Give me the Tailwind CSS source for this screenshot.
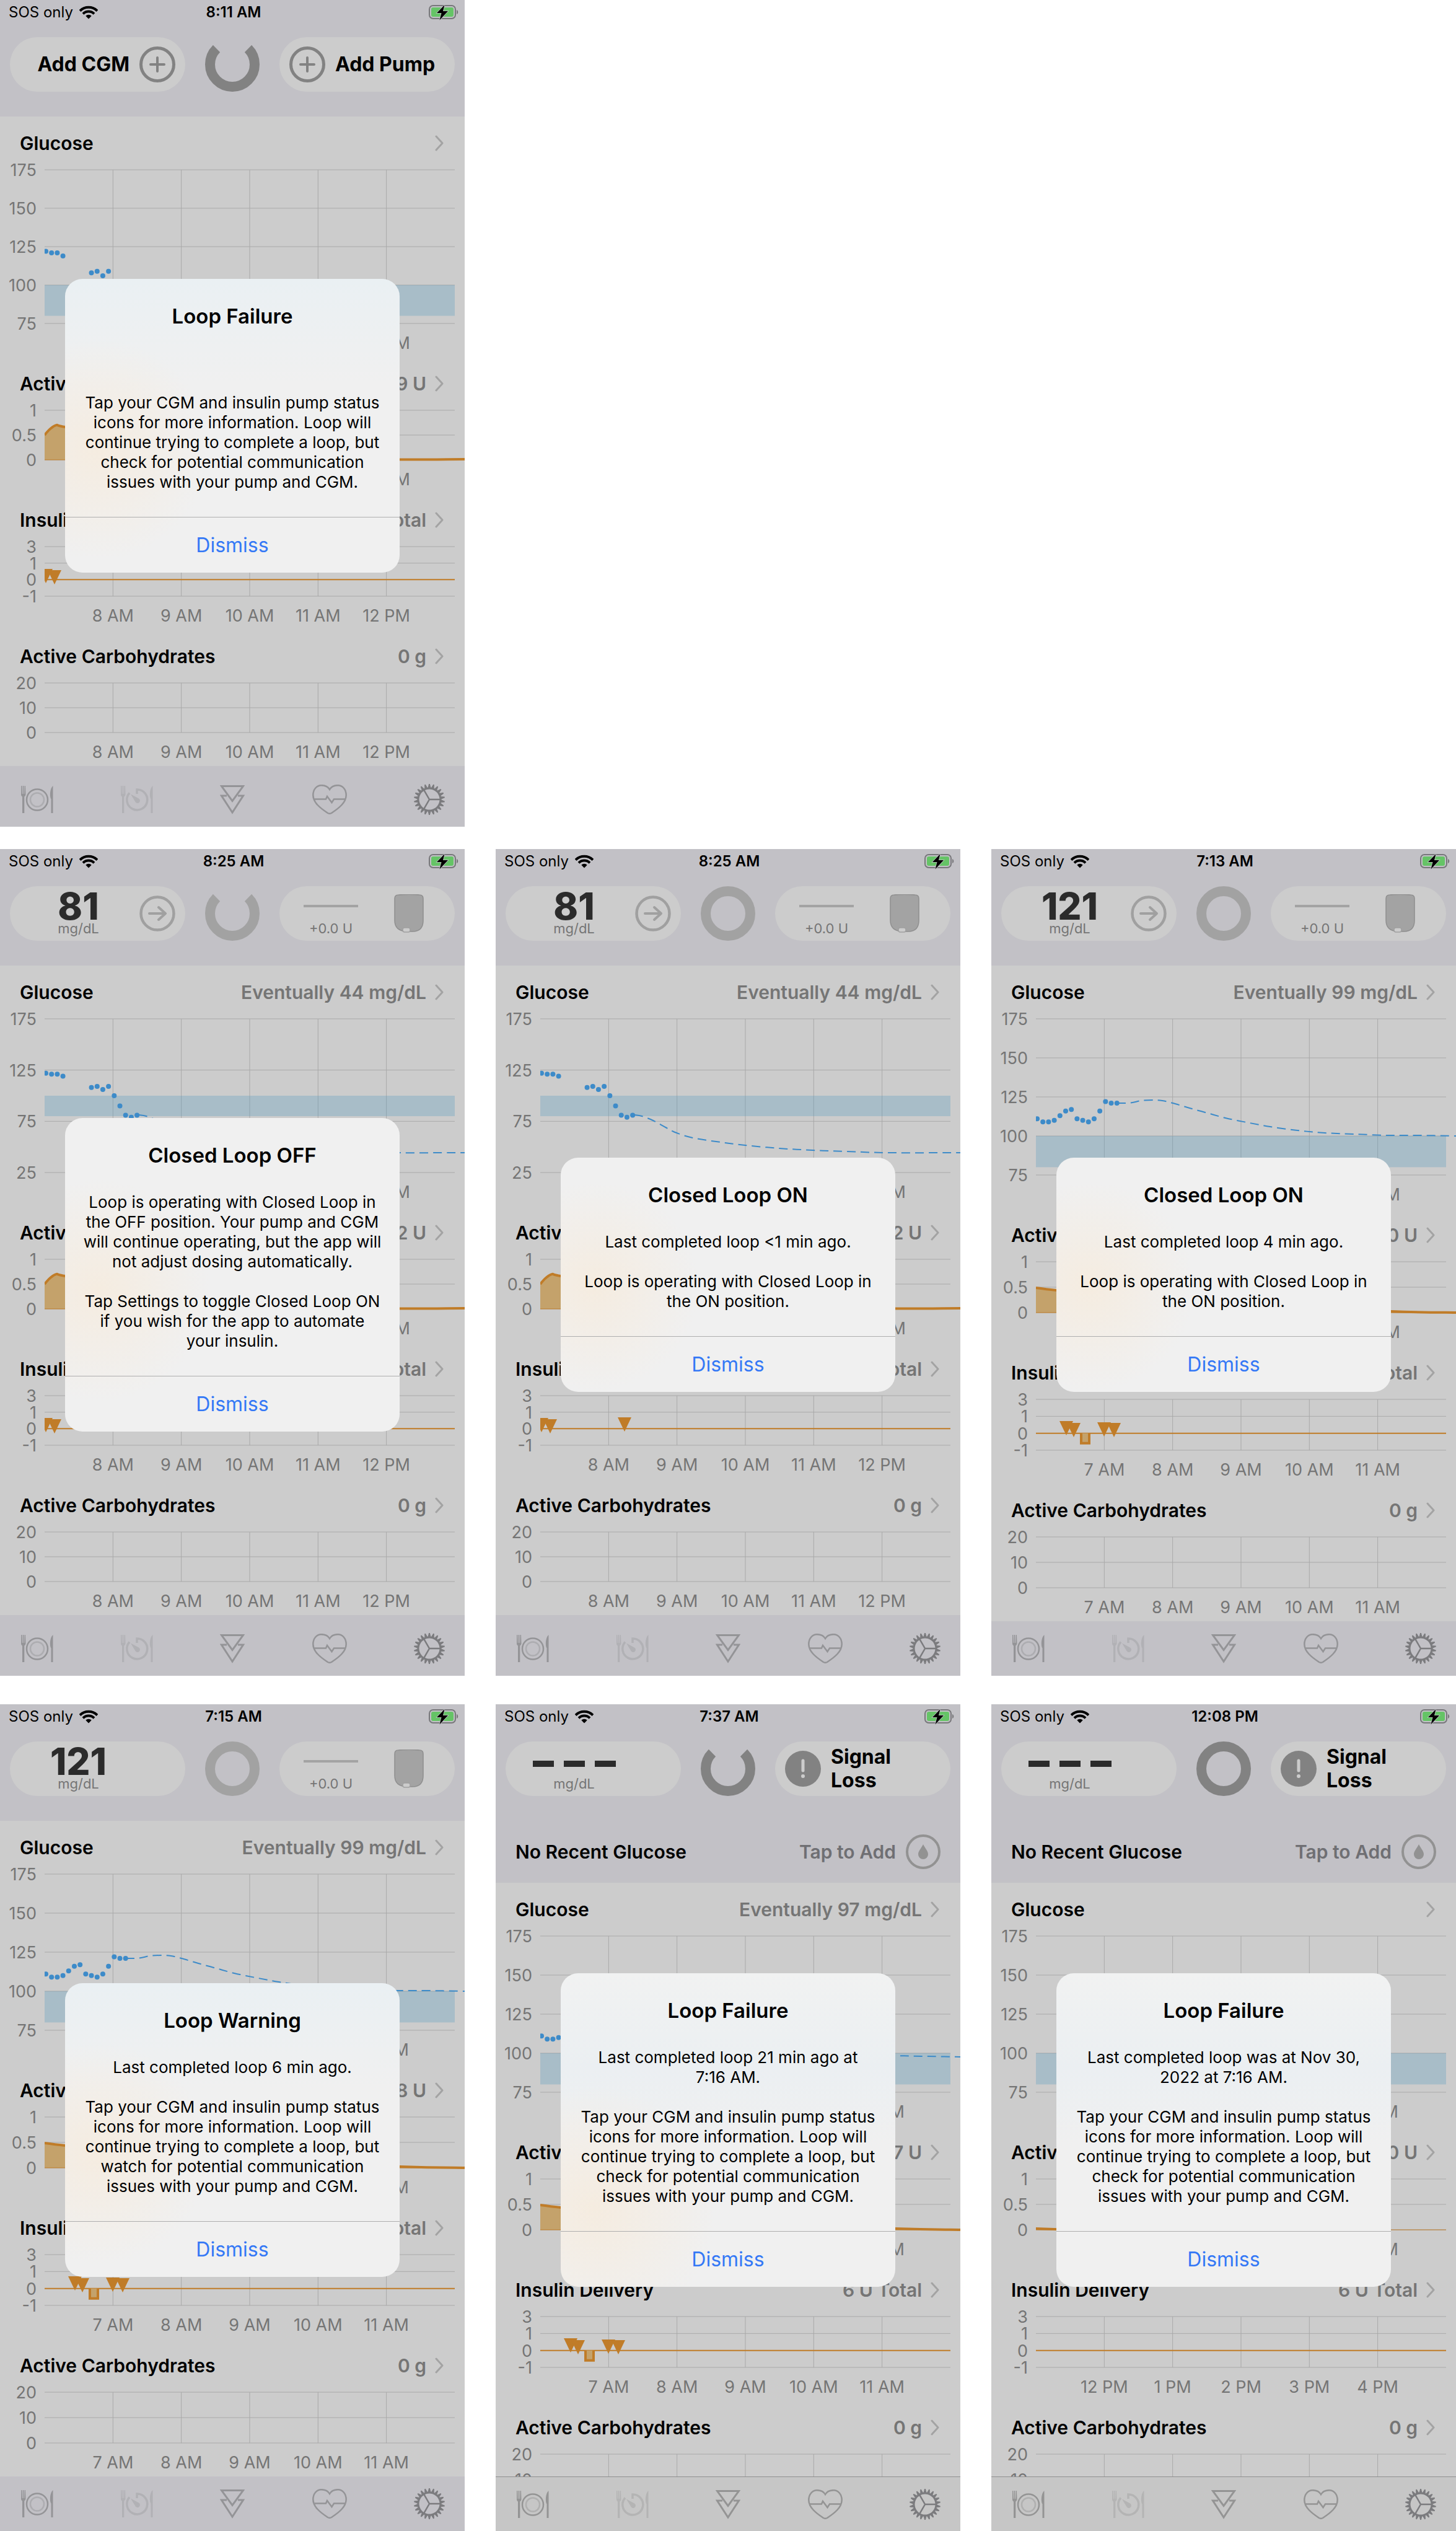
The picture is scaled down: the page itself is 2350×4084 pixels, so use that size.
<!DOCTYPE html>
<html lang="en">
<head>
<meta charset="utf-8">
<meta name="viewport" content="width=device-width, initial-scale=1">
<title>Loop status alerts</title>
<script src="https://cdn.jsdelivr.net/npm/@tailwindcss/browser@4"></script>
</head>
<body class="bg-white font-['Inter',sans-serif] text-black">

<svg class="absolute h-0 w-0" aria-hidden="true">
  <defs>
    <clipPath id="plot-area"><rect x="72" y="0" width="678" height="500"/></clipPath>
    <symbol id="wifi" viewBox="0 0 30 22">
      <path d="M1 8.500a19.800 19.800 0 0 1 28 0M6 13.300a12.700 12.700 0 0 1 18 0" fill="none" stroke="#000" stroke-width="4"/>
      <path d="M15 21.500l-4.700-4.700a6.700 6.700 0 0 1 9.400 0z"/>
    </symbol>
    <symbol id="battery" viewBox="0 0 48 26">
      <rect x="1" y="2" width="42" height="21" rx="6" fill="none" stroke="#77777a" stroke-width="2"/>
      <rect x="4" y="5" width="36" height="15" rx="3" fill="#65c466"/>
      <path d="M45 9c3 1 3 6 0 7z" fill="#77777a"/>
      <path d="M25.500 1L13 14h7.500l-3 11.500L31 11h-8z" stroke="#c2c1c6" stroke-width="1.500" paint-order="stroke"/>
    </symbol>
    <symbol id="chevron" viewBox="0 0 14 26">
      <path d="M2 2l10 11L2 24" fill="none" stroke="#a3a3a3" stroke-width="3" stroke-linecap="round" stroke-linejoin="round"/>
    </symbol>
    <symbol id="plus" viewBox="0 0 58 58">
      <circle cx="29" cy="29" r="26.500" fill="none" stroke="#828282" stroke-width="5"/>
      <path d="M29 18v22M18 29h22" stroke="#828282" stroke-width="4" stroke-linecap="round"/>
    </symbol>
    <symbol id="arrow" viewBox="0 0 58 58">
      <circle cx="29" cy="29" r="26.500" fill="none" stroke="#a0a0a0" stroke-width="4.500"/>
      <path d="M16 29h26M31 19l11 10-11 10" fill="none" stroke="#a0a0a0" stroke-width="4" stroke-linecap="round" stroke-linejoin="round"/>
    </symbol>
    <symbol id="alert" viewBox="0 0 58 58">
      <circle cx="29" cy="29" r="29" fill="#828282"/>
      <path d="M29 16v16" stroke="#ccc" stroke-width="5" stroke-linecap="round"/>
      <circle cx="29" cy="41" r="3" fill="#ccc"/>
    </symbol>
    <symbol id="drop" viewBox="0 0 56 56">
      <circle cx="28" cy="28" r="26" fill="none" stroke="#929292" stroke-width="4"/>
      <path d="M28 16c3 6 8 11 8 16a8 8 0 0 1-16 0c0-5 5-10 8-16z" fill="#929292"/>
    </symbol>
    <symbol id="ring-open" viewBox="0 0 88 88">
      <path d="M18.500 18.500a36 36 0 1 0 51 0" fill="none" stroke="currentColor" stroke-width="16"/>
    </symbol>
    <symbol id="ring-closed" viewBox="0 0 88 88">
      <circle cx="44" cy="44" r="36" fill="none" stroke="currentColor" stroke-width="16"/>
    </symbol>
    <symbol id="reservoir" viewBox="0 0 48 62">
      <path d="M1 7Q1 1 7 1Q24 -.5 41 1Q47 1 47 7V42Q47 60 30 60H22Q1 60 1 42z" fill="#a3a3a3" stroke="#8f8f8f" stroke-width="1.500"/>
      <rect x="14" y="54" width="12" height="7" rx="3" fill="#ccc" stroke="#a0a0a0" stroke-width="1.500"/>
    </symbol>
    <symbol id="meal" viewBox="0 0 52 46">
      <path d="M0 1h1.300l.5 13h.9V1h1.600v13h.9L5.700 1H7l.5 14c0 1.500-1 2.500-2.200 3.500V45H2V18.500C.8 17.500-.2 16.500 0 15z"/>
      <path d="M51.500 1V45h-3V22.500c-2.500-3-2.500-17 3-21.500z"/>
      <circle cx="26" cy="23.500" r="17" fill="none" stroke="currentColor" stroke-width="2.500"/>
      <circle cx="26" cy="23.500" r="11" fill="none" stroke="currentColor" stroke-width="2.500" opacity=".45"/>
    </symbol>
    <symbol id="premeal" viewBox="0 0 52 46">
      <path d="M0 1h1.300l.5 13h.9V1h1.600v13h.9L5.700 1H7l.5 14c0 1.500-1 2.500-2.200 3.500V45H2V18.500C.8 17.500-.2 16.500 0 15z"/>
      <path d="M51.500 1V45h-3V22.500c-2.500-3-2.500-17 3-21.500z"/>
      <path d="M26 14V7a16.500 16.500 0 1 1-12 5.500" fill="none" stroke="currentColor" stroke-width="3.500"/>
      <path d="M16 14.500l13 7a4 4 0 1 1-5.500 5.500z"/>
    </symbol>
    <symbol id="bolus" viewBox="0 0 40 48">
      <path d="M2.500 2.500h35L20 26.500zM11 18H2.500L20 45l17.500-27H29" fill="none" stroke="currentColor" stroke-width="3"/>
    </symbol>
    <symbol id="heart" viewBox="0 0 56 48">
      <path d="M28 8C24 1 17 1.200 14.500 1.200C7 1.200 1.300 8 1.300 17C1.300 29 13 38 25 46Q28 47.600 31 46C43 38 54.700 29 54.700 17C54.700 8 49 1.200 41.500 1.200C39 1.200 32 1 28 8zM2.500 23.500H22l2-4.500 7.500 10 3.500-5.500h18.500" fill="none" stroke="currentColor" stroke-width="2.500"/>
    </symbol>
  </defs>
</svg>

<main id="gallery" class="mx-auto flex w-full flex-col"></main>

<script>
const AM8 = ['8 AM', '9 AM', '10 AM', '11 AM', '12 PM'];
const AM7 = ['7 AM', '8 AM', '9 AM', '10 AM', '11 AM'];
const PM12 = ['12 PM', '1 PM', '2 PM', '3 PM', '4 PM'];
const HOUR = 110.33, LEFT = 72, TOP = 86, BOTTOM = 54;

const icon = (id, cls) => `<svg class="${cls}" fill="currentColor" aria-hidden="true"><use href="#${id}"/></svg>`;

function gear() {
  const pts = [];
  for (let i = 0; i < 22; i++) {
    const a = (i + .5) * 2 * Math.PI / 22, s = 2 * Math.PI / 22;
    for (const [o, r] of [[-.42, 19.5], [-.12, 25], [.12, 25], [.42, 19.5]])
      pts.push((25 + r * Math.cos(a + o * s)).toFixed(1) + ' ' + (25 + r * Math.sin(a + o * s)).toFixed(1));
  }
  return `<svg class="h-[50px] w-[50px] text-[#7b7b7e]" viewBox="0 0 50 50" aria-hidden="true">
    <path fill="currentColor" fill-rule="evenodd" d="M${pts.join('L')}ZM25 8.500a16.500 16.500 0 1 0 .01 0z"/>
    <path d="M25 25H43M25 25L16 9.400M25 25L16 40.600" stroke="currentColor" stroke-width="2.500"/></svg>`;
}

/* Smooth path through a list of points */
function curve(p) {
  let d = `M${p[0]}`;
  for (let i = 0; i < p.length - 1; i++) {
    const a = p[i - 1] || p[i], b = p[i], c = p[i + 1], e = p[i + 2] || c;
    d += `C${b[0] + (c[0] - a[0]) / 6} ${b[1] + (c[1] - a[1]) / 6} ${c[0] - (e[0] - b[0]) / 6} ${c[1] - (e[1] - b[1]) / 6} ${c}`;
  }
  return d;
}

/* Grid, axis labels and series of one chart */
function chart({ h, ticks, hours, layer, label }) {
  const bottom = h - BOTTOM, y = i => TOP + (bottom - TOP) * i / (ticks.length - 1);
  return `<svg class="block h-auto w-full" viewBox="0 ${TOP} 750 ${h - TOP}" overflow="visible" role="img" aria-label="${label} chart">
    <g stroke="#a9a9a9">
      ${ticks.map((t, i) => `<path d="M72 ${y(i)}H734"/>`).join('')}
      ${hours.map((t, i) => `<path d="M${LEFT + HOUR * (i + 1)} ${TOP}V${bottom}"/>`).join('')}
    </g>
    <g class="fill-[#757575] text-[27px]">
      ${ticks.map((t, i) => `<text x="59" y="${y(i) + 10}" text-anchor="end">${t}</text>`).join('')}
      ${hours.map((t, i) => `<text x="${LEFT + HOUR * (i + 1)}" y="${h - 13}" text-anchor="middle">${t}</text>`).join('')}
    </g>
    <g clip-path="url(#plot-area)">${layer ? layer(y) : ''}</g>
  </svg>`;
}

function section(title, value, body) {
  return `<section class="bg-[#cccccc]">
    <a href="#" class="flex h-[86px] items-center justify-between pr-[34px] pl-8">
      <h2 class="text-[30px] font-semibold">${title}</h2>
      <span class="flex items-center gap-3.5 text-[30px] font-semibold text-[#757575]">${value}${icon('chevron', 'h-[26px] w-[14px]')}</span>
    </a>${body}</section>`;
}

function glucose(p) {
  const t = p.ticks, max = t[0], min = t[t.length - 1];
  const h = p.tall ? 392 : 388, bottom = h - BOTTOM;
  const py = v => TOP + (max - v) / (max - min) * (bottom - TOP);
  return section('Glucose', p.eventually || '', chart({ h, ticks: t, hours: p.hours, label: 'Glucose', layer: () =>
    `<rect x="72" y="${py(100)}" width="662" height="${py(80) - py(100)}" fill="#5f9fbf" opacity=".33"/>
     ${p.dots.map(([i, v]) => `<circle cx="${74 + HOUR / 12 * i}" cy="${py(v)}" r="4" fill="#3d8bc9"/>`).join('')}
     ${p.predict ? `<path d="${curve(p.predict)}" fill="none" stroke="#3d8bc9" stroke-width="2" stroke-dasharray="14 8"/>` : ''}` }));
}

function activeInsulin(p) {
  const h = p.tall ? 222 : 220, base = h - BOTTOM;
  return section('Active Insulin', p.iob, chart({ h, ticks: ['1', '0.5', '0'], hours: p.hours, label: 'Active insulin', layer: () => p.iobFlat
    ? `<path d="M72 ${base}H734" stroke="#c07c28"/><path d="M70 ${base - 2}L130 ${base}" stroke="#c07c28" stroke-width="4"/>`
    : `<path d="${curve(p.iobLine)}L750 ${base}H72Z" fill="#c4a26b"/><path d="${curve(p.iobLine)}" fill="none" stroke="#c07c28" stroke-width="4"/><path d="M72 ${base}H734" stroke="#c07c28"/>` }));
}

function delivery(p) {
  const h = p.tall ? 222 : 220;
  return section('Insulin Delivery', p.total, chart({ h, ticks: ['3', '1', '0', '-1'], hours: p.hours, label: 'Insulin delivery', layer: y =>
    `<path d="M72 ${y(2)}H734" stroke="#c07c28" stroke-width="2"/>
     ${p.boluses.map(([x, top]) => `<path d="M${x - 11} ${top}h22l-11 23z" fill="#c07c28"/>`).join('')}
     ${p.suspend ? `<path d="M145 ${y(2)}v16h13v-16" fill="#c4a26b" stroke="#c07c28" stroke-width="4"/>` : ''}` }));
}

const carbs = p => section('Active Carbohydrates', '0 g', chart({ h: p.tall ? 222 : 220, ticks: ['20', '10', '0'], hours: p.hours, label: 'Active carbohydrates' }));

function cgmPill(p) {
  if (p.cgm === 'add') return `<button class="flex h-22 items-center justify-end gap-4 rounded-full bg-[#cccccc] pr-4 text-[32px] font-bold">Add CGM${icon('plus', 'h-[58px] w-[58px]')}</button>`;
  const value = p.cgm === '---'
    ? `<span class="flex h-12 items-center gap-4 pt-2" aria-label="No reading">${'<i class="h-2.5 w-[34px] bg-[#2b2b2b]"></i>'.repeat(3)}</span>`
    : `<span class="h-12 text-[60px] leading-[48px] font-extrabold text-[#2b2b2b]">${p.cgm}</span>`;
  return `<button class="flex h-22 items-center rounded-full bg-[#cccccc] pr-4 pl-3">
    <span class="flex flex-1 flex-col items-center">${value}<span class="text-[22px] leading-6 text-[#757575]">mg/dL</span></span>
    ${p.trend ? icon('arrow', 'h-[58px] w-[58px]') : '<span class="w-[58px]"></span>'}</button>`;
}

function pumpPill(p) {
  if (p.pump === 'add') return `<button class="flex h-22 items-center gap-4 rounded-full bg-[#cccccc] pl-4 text-[32px] font-bold">${icon('plus', 'h-[58px] w-[58px]')}Add Pump</button>`;
  if (p.pump === 'loss') return `<button class="flex h-22 items-center gap-4 rounded-full bg-[#cccccc] pl-4 text-left text-[32px] leading-[38px] font-bold">${icon('alert', 'h-[58px] w-[58px]')}<span>Signal<br>Loss</span></button>`;
  return `<button class="flex h-22 items-center justify-between rounded-full bg-[#cccccc] pr-[50px] pl-[39px]">
    <span class="flex flex-col items-center"><span class="flex h-12 items-center"><i class="h-1 w-22 bg-[#a3a3a3]"></i></span><span class="text-[22px] leading-6 text-[#757575]">+0.0 U</span></span>
    ${icon('reservoir', 'h-[62px] w-12')}</button>`;
}

const surfaces = {
  high: 'bg-[radial-gradient(circle_at_10%_58%,#f5ece0,transparent_32%),linear-gradient(to_bottom,#eaf0f3,#f0f0f0_36%)]',
  plain: 'bg-[radial-gradient(circle_at_10%_55%,#f5ece0,transparent_32%)]',
  low: 'bg-[radial-gradient(circle_at_10%_75%,#f5ece0,transparent_32%),linear-gradient(to_bottom,#f1f2f2,#ebeff2_30%,#f0f0f0_55%)]',
  lowPlain: 'bg-[linear-gradient(to_bottom,#f1f2f2,#ebeff2_30%,#f0f0f0_55%)]'
};

function phone(p) {
  return `<article class="relative flex aspect-[750/1334] flex-col overflow-hidden bg-[#c2c1c6]">
    <header>
      <div class="grid h-10 grid-cols-3 items-center pr-2.5 pl-3.5 text-[24px]">
        <span class="flex items-center gap-2.5">SOS only${icon('wifi', 'h-[22px] w-[30px]')}</span>
        <time class="text-center font-semibold">${p.time}</time>
        <span class="justify-self-end">${icon('battery', 'h-[26px] w-12')}</span>
      </div>
      <div class="grid grid-cols-[1fr_88px_1fr] items-center gap-8 px-4 pt-5 pb-10">
        ${cgmPill(p)}
        ${icon(p.ring, p.faint ? 'h-22 w-22 text-[#a2a2a2]' : 'h-22 w-22 text-[#828282]')}
        ${pumpPill(p)}
      </div>
      ${p.stale ? `<a href="#" class="flex h-[100px] items-center justify-between px-8 text-[30px] font-semibold">
        <span>No Recent Glucose</span><span class="flex items-center gap-4 text-[#6f6f73]">Tap to Add${icon('drop', 'h-14 w-14')}</span></a>` : ''}
    </header>
    <div class="min-h-0 flex-1 overflow-hidden">${glucose(p)}${activeInsulin(p)}${delivery(p)}${carbs(p)}</div>
    <nav class="${p.stale ? 'flex h-22 shrink-0 items-center justify-between border-t border-[#8f8f8f] bg-[#c6c6c6] pr-8 pl-[34px] text-[#949494]' : 'flex h-22 shrink-0 items-center justify-between pr-8 pl-[34px] text-[#949497]'}">
      <button aria-label="Add meal">${icon('meal', 'h-[46px] w-[52px]')}</button>
      <button aria-label="Pre-meal preset" class="opacity-35">${icon('premeal', 'h-[46px] w-[52px]')}</button>
      <button aria-label="Bolus">${icon('bolus', 'h-12 w-10')}</button>
      <button aria-label="Workout preset">${icon('heart', 'h-12 w-14')}</button>
      <button aria-label="Settings">${gear()}</button>
    </nav>
    <div class="absolute inset-0 flex items-center justify-center pt-10">
      <div role="alertdialog" aria-label="${p.title}" class="w-[540px] max-w-[90%] overflow-hidden rounded-[28px] bg-[#f0f0f0] text-center ${surfaces[p.surface]}">
        <h3 class="pt-10 text-[33px] leading-10 font-semibold">${p.title}</h3>
        <p class="mt-10 pb-10 text-[26px] leading-8 whitespace-pre-line">${p.text}</p>
        <button class="h-[90px] w-full border-t border-[#aeaeae] text-[32px] text-[#3478f6]">Dismiss</button>
      </div>
    </div>
  </article>`;
}

const tap = verb => `Tap your CGM and insulin pump status\nicons for more information. Loop will\ncontinue trying to complete a loop, but\n${verb} for potential communication\nissues with your pump and CGM.`;

const early = [[0, 122], [1, 121], [2, 121], [3, 119], [8, 108], [9, 109], [10, 106], [11, 109]];
const falling = [...early, [12, 100], [13, 90], [14, 81], [15, 79], [16, 81]];
const rising = [111, 109, 109, 110, 113, 116, 117, 111, 110, 109, 111, 116, 122, 121, 121].map((v, i) => [i, v]);
const fallPredict = [[224, 241], [236, 243], [254, 250], [274, 261], [292, 270], [318, 278], [363, 285], [403, 290], [458, 295], [512, 298], [567, 300], [632, 302], [750, 302]];
const risePredict = [[203, 222], [215, 222], [228, 221], [242, 218], [262, 217], [276, 218], [293, 222], [320, 230], [349, 238], [378, 246], [412, 253], [450, 260], [494, 266], [538, 270], [586, 272], [640, 274], [688, 274], [750, 275]];
const latePredict = [[240, 222], [300, 232], [400, 256], [500, 272], [600, 278], [645, 279], [690, 280], [750, 281]];
const iobA = [[72, 126], [80, 117], [91, 110], [105, 113], [200, 130], [400, 158], [600, 165], [750, 165]];
const iobB = [[72, 128], [105, 132], [220, 143], [400, 156], [645, 166], [750, 168]];
const wide = [175, 125, 75, 25], fine = [175, 150, 125, 100, 75];
const bolusA = [[74, 122], [88, 124]], bolusB = [[121, 121], [133, 124], [182, 123], [198, 124]];

const rows = [
  [{ time: '8:11 AM', cgm: 'add', pump: 'add', ring: 'ring-open', surface: 'high', hours: AM8, ticks: fine, dots: early, iob: '0.69 U', iobLine: iobA, total: '8 U Total', boluses: bolusA,
     title: 'Loop Failure', text: '\n\n' + tap('check') }],
  [{ time: '8:25 AM', cgm: '81', trend: true, ring: 'ring-open', faint: true, surface: 'plain', hours: AM8, ticks: wide, dots: falling, predict: fallPredict, eventually: 'Eventually 44 mg/dL', iob: '0.62 U', iobLine: iobA, total: '8 U Total', boluses: bolusA,
     title: 'Closed Loop OFF', text: 'Loop is operating with Closed Loop in\nthe OFF position. Your pump and CGM\nwill continue operating, but the app will\nnot adjust dosing automatically.\n\nTap Settings to toggle Closed Loop ON\nif you wish for the app to automate\nyour insulin.' },
   { time: '8:25 AM', cgm: '81', trend: true, ring: 'ring-closed', faint: true, surface: 'plain', hours: AM8, ticks: wide, dots: falling, predict: fallPredict, eventually: 'Eventually 44 mg/dL', iob: '0.62 U', iobLine: iobA, total: '8 U Total', boluses: [...bolusA, [208, 121]],
     title: 'Closed Loop ON', text: 'Last completed loop &lt;1 min ago.\n\nLoop is operating with Closed Loop in\nthe ON position.' },
   { time: '7:13 AM', cgm: '121', trend: true, ring: 'ring-closed', faint: true, tall: true, surface: 'plain', hours: AM7, ticks: fine, dots: rising, predict: risePredict, eventually: 'Eventually 99 mg/dL', iob: '0.60 U', iobLine: iobB, total: '6 U Total', boluses: bolusB, suspend: true,
     title: 'Closed Loop ON', text: 'Last completed loop 4 min ago.\n\nLoop is operating with Closed Loop in\nthe ON position.' }],
  [{ time: '7:15 AM', cgm: '121', ring: 'ring-closed', faint: true, tall: true, surface: 'high', hours: AM7, ticks: fine, dots: rising, predict: risePredict, eventually: 'Eventually 99 mg/dL', iob: '0.58 U', iobLine: iobB, total: '6 U Total', boluses: bolusB, suspend: true,
     title: 'Loop Warning', text: 'Last completed loop 6 min ago.\n\n' + tap('watch') },
   { time: '7:37 AM', cgm: '---', pump: 'loss', ring: 'ring-open', stale: true, tall: true, surface: 'low', hours: AM7, ticks: fine, dots: rising, predict: latePredict, eventually: 'Eventually 97 mg/dL', iob: '0.47 U', iobLine: iobB, total: '6 U Total', boluses: bolusB, suspend: true,
     title: 'Loop Failure', text: 'Last completed loop 21 min ago at\n7:16 AM.\n\n' + tap('check') },
   { time: '12:08 PM', cgm: '---', pump: 'loss', ring: 'ring-closed', stale: true, tall: true, surface: 'lowPlain', hours: PM12, ticks: fine, dots: [], iob: '0.00 U', iobFlat: true, total: '6 U Total', boluses: [],
     title: 'Loop Failure', text: 'Last completed loop was at Nov 30,\n2022 at 7:16 AM.\n\n' + tap('check') }]
];
const spacing = ['grid grid-cols-3 gap-x-[50px]', 'mt-9 grid grid-cols-3 gap-x-[50px]', 'mt-[46px] grid grid-cols-3 gap-x-[50px]'];

document.getElementById('gallery').innerHTML =
  rows.map((r, i) => `<div class="${spacing[i]}">${r.map(phone).join('')}</div>`).join('');
</script>
</body>
</html>
